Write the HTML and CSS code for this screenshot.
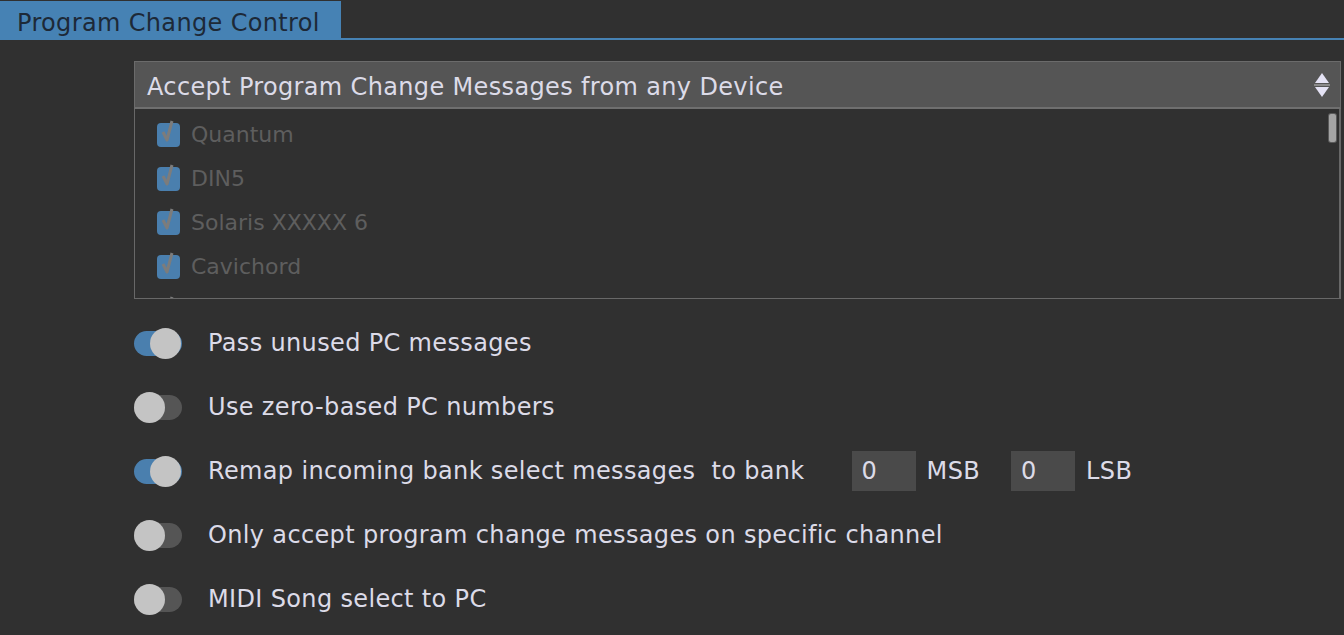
FILE: index.html
```html
<!DOCTYPE html>
<html>
<head>
<meta charset="utf-8">
<link rel="stylesheet" href="styles.css">
</head>
<body>
<div class="tabbar">
  <div class="tab">Program Change Control</div>
</div>
<div class="content">
  <div class="select">
    <span class="select-text">Accept Program Change Messages from any Device</span>
    <svg class="select-arrows" width="16" height="26" viewBox="0 0 16 26">
      <polygon points="8,1 15,11 1,11" fill="#e4e2f4"/>
      <rect x="0" y="12" width="16" height="2" fill="#8a8a8a"/>
      <polygon points="1,15 15,15 8,25" fill="#e4e2f4"/>
    </svg>
  </div>
  <div class="list">
    <div class="list-items">
      <div class="item"><span class="cb"><svg viewBox="0 0 22 28" width="22" height="28"><path d="M6 14 L10 22 L15 3" fill="none" stroke="#7c7c7c" stroke-width="3" stroke-linejoin="round"/></svg></span><span class="item-text">Quantum</span></div>
      <div class="item"><span class="cb"><svg viewBox="0 0 22 28" width="22" height="28"><path d="M6 14 L10 22 L15 3" fill="none" stroke="#7c7c7c" stroke-width="3" stroke-linejoin="round"/></svg></span><span class="item-text">DIN5</span></div>
      <div class="item"><span class="cb"><svg viewBox="0 0 22 28" width="22" height="28"><path d="M6 14 L10 22 L15 3" fill="none" stroke="#7c7c7c" stroke-width="3" stroke-linejoin="round"/></svg></span><span class="item-text">Solaris XXXXX 6</span></div>
      <div class="item"><span class="cb"><svg viewBox="0 0 22 28" width="22" height="28"><path d="M6 14 L10 22 L15 3" fill="none" stroke="#7c7c7c" stroke-width="3" stroke-linejoin="round"/></svg></span><span class="item-text">Cavichord</span></div>
      <div class="item"><span class="cb"><svg viewBox="0 0 22 28" width="22" height="28"><path d="M6 14 L10 22 L15 3" fill="none" stroke="#7c7c7c" stroke-width="3" stroke-linejoin="round"/></svg></span></div>
    </div>
    <div class="scrollthumb"></div>
  </div>
  <div class="options">
    <div class="row">
      <span class="toggle on"><span class="knob"></span></span>
      <span class="label">Pass unused PC messages</span>
    </div>
    <div class="row">
      <span class="toggle"><span class="knob"></span></span>
      <span class="label">Use zero-based PC numbers</span>
    </div>
    <div class="row">
      <span class="toggle on"><span class="knob"></span></span>
      <span class="label">Remap incoming bank select messages&nbsp; to bank</span>
      <span class="num num-first">0</span>
      <span class="unit">MSB</span>
      <span class="num">0</span>
      <span class="unit">LSB</span>
    </div>
    <div class="row">
      <span class="toggle"><span class="knob"></span></span>
      <span class="label">Only accept program change messages on specific channel</span>
    </div>
    <div class="row">
      <span class="toggle"><span class="knob"></span></span>
      <span class="label">MIDI Song select to PC</span>
    </div>
  </div>
</div>
</body>
</html>
```
FILE: styles.css
```css
html, body {
  margin: 0;
  padding: 0;
}
body {
  background: #303030;
  font-family: "DejaVu Sans", Verdana, sans-serif;
  font-size: 24px;
  letter-spacing: 0.35px;
  color: #dcdbe8;
  width: 1344px;
  height: 635px;
  overflow: hidden;
}
.tabbar {
  padding-top: 1px;
  border-bottom: 2px solid #4682b4;
  height: 37px;
  display: flex;
}
.tab {
  width: 324px;
  padding-left: 17px;
  height: 37px;
  background: #4682b4;
  color: #1d2937;
  line-height: 44px;
  white-space: nowrap;
}
.content {
  margin-top: 21px;
  margin-left: 134px;
  margin-right: 3px;
}
.select {
  height: 45px;
  background: #555555;
  border: 1px solid #6b6b6b;
  border-bottom: 2px solid #6f6f6f;
  display: flex;
  align-items: center;
  justify-content: space-between;
  padding-left: 12px;
  padding-right: 10px;
}
.select-text {
  white-space: nowrap;
  line-height: 45px;
  padding-top: 6px;
}
.select-arrows {
  display: block;
}
.list {
  height: 189px;
  border: 1px solid #686868;
  border-top: none;
  border-right-width: 2px;
  background: #303030;
  overflow: hidden;
  position: relative;
}
.list-items {
  padding-top: 3px;
  padding-left: 22px;
}
.item {
  height: 44px;
  display: flex;
  align-items: center;
  color: #5e5e5e;
  font-size: 22px;
  letter-spacing: 0;
}
.cb {
  width: 23px;
  height: 24px;
  background: #4a7fae;
  border-radius: 4px;
  margin-right: 11px;
  position: relative;
  margin-top: 1px;
}
.cb svg {
  position: absolute;
  left: 0;
  top: -5px;
}
.item-text {
  white-space: nowrap;
}
.scrollthumb {
  position: absolute;
  right: 3px;
  top: 5px;
  width: 7px;
  height: 28px;
  background: #a4a4a4;
  border-radius: 2px;
  box-shadow: 0 0 0 1px #5a5a5a;
}
.options {
  margin-top: 12px;
}
.row {
  height: 64px;
  display: flex;
  align-items: center;
}
.toggle {
  width: 48px;
  height: 25px;
  border-radius: 13px;
  background: #555555;
  position: relative;
  flex: none;
}
.toggle.on {
  background: #4a7fae;
}
.knob {
  position: absolute;
  top: -3px;
  left: 0;
  width: 31px;
  height: 31px;
  border-radius: 50%;
  background: #c4c4c4;
}
.toggle.on .knob {
  left: auto;
  right: 1px;
}
.label {
  margin-left: 26px;
  white-space: nowrap;
}
.num {
  width: 54px;
  height: 40px;
  background: #4a4a4a;
  padding-left: 10px;
  line-height: 40px;
  margin-right: 11px;
}
.num-first {
  margin-left: 47px;
}
.unit {
  margin-right: 31px;
}
```
